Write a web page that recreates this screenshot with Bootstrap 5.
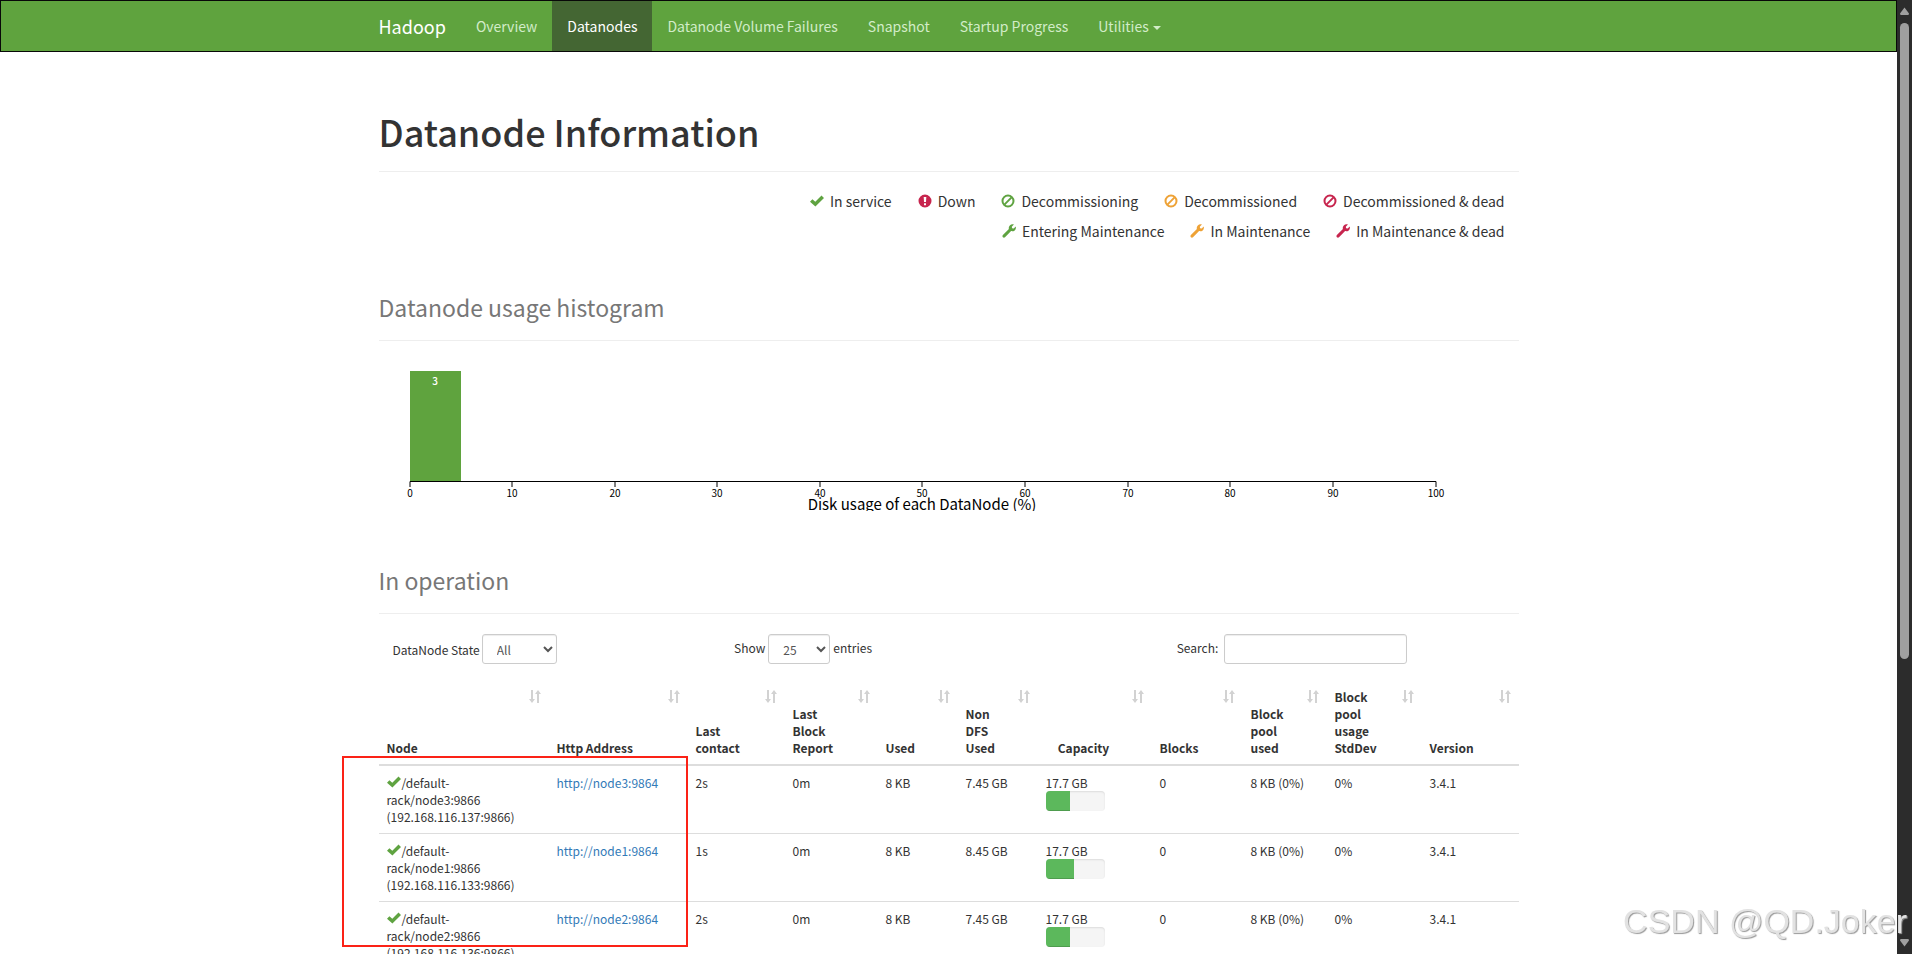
<!DOCTYPE html>
<html lang="en">
<head>
<meta charset="utf-8">
<meta name="viewport" content="width=device-width, initial-scale=1">
<title>Datanode Information</title>
<link href="https://cdn.jsdelivr.net/npm/bootstrap@5.3.0/dist/css/bootstrap.min.css" rel="stylesheet">
<style>
body{font:14px/20px "Noto Sans CJK SC",sans-serif;color:#333;background:#fff}
.page-pane{min-width:0}
.container{max-width:1170px;padding-left:15px;padding-right:15px}
.topbar{background:#5fa33e;border:1px solid #080808;padding:0}
.topbar .navbar-brand{font-size:18px;line-height:20px;color:#fff;padding:15px;margin:0 0 0 -15px}
.topbar .nav-link{color:#d2ecc8;padding:15px!important;line-height:20px}
.topbar .nav-link.active{background:#446633;color:#fff}
.topbar .dropdown-toggle::after{border-width:4px 4px 0;margin-left:4px;vertical-align:2px}
.page-title{border-bottom:1px solid #eee;margin:59px 0 0;padding-bottom:20px}
.page-title h1{font-size:36px;line-height:40px;font-weight:500;margin:0}
.section-title{border-bottom:1px solid #eee;padding-bottom:20px}
.section-title h2{font-size:23px;line-height:26px;font-weight:400;color:#777;margin:0}
.legend-list{padding:14px 14px 0;margin-bottom:48px}
.legend-list ul{column-gap:26px;line-height:30px}
.legend-list li{display:flex;align-items:center;gap:6px}
.ico{width:14px;height:14px;flex:none}
.ok{color:#5fa341}.bad{color:#c7254e}.warn{color:#eea236}
.histogram{display:block;margin:20px 0 56px;overflow:hidden;max-width:100%}
.histogram text{text-anchor:middle;font-size:10px}
.histogram .caption-text{font-size:15px}
.filters{font-size:12px;line-height:17px;padding-top:20px;margin-bottom:16px}
.filters .form-control{appearance:auto;height:30px;font-size:12px;line-height:18px;padding:5px 10px;border:1px solid #ccc;border-radius:3px;color:#555;box-shadow:inset 0 1px 1px rgba(0,0,0,.075)}
.state-select{width:75px}.length-select{width:62px}.search-input{width:183px}
.filters .shift{margin:0 2px 0 14px}
.filters .lead-gap{column-gap:3px}
.filters .search-cell{padding-left:20px;column-gap:6px}
.node-table{table-layout:fixed;width:100%;font-size:12px;line-height:17px;color:#333;margin:0}
.node-table>:not(caption)>*>*{padding:8px;border-bottom:1px solid #ddd;color:#333;background:none;vertical-align:top}
.node-table>thead>tr>th{vertical-align:bottom;border-bottom:2px solid #ddd;padding-right:30px;position:relative;font-weight:700}
.node-table>thead>tr>th svg{position:absolute;top:10px;right:8px;width:12px;height:13px;color:#d2d2d2}
.node-table a{color:#337ab7;text-decoration:none}
.node-table .ico{margin-right:1px;vertical-align:-1px}
.node-table .progress{width:59px;height:20px;background:#f5f5f5;border-radius:4px;box-shadow:inset 0 1px 2px rgba(0,0,0,.1)}
.node-table .progress-bar{background:#5cb85c;box-shadow:inset 0 -1px 0 rgba(0,0,0,.15)}
.highlight{left:-37px;top:76px;width:346px;height:191px;border:2px solid #fb2216;pointer-events:none}
.scroller{width:15px;background:#2c2c2c;padding:7px 0}
.scroller .thumb{width:9px;height:636px;border-radius:5px;background:#9f9f9f;margin:8px 0 auto 3px}
.scroller svg{width:9px;height:8px;margin-left:3px;fill:#9f9f9f;flex:none}
.watermark{right:5px;bottom:13px;font:34px/40px "Liberation Sans",sans-serif;color:#e2e2e2;text-shadow:1px 1px 1px #999;pointer-events:none;white-space:nowrap}
</style>
<script src="https://cdn.jsdelivr.net/npm/bootstrap@5.3.0/dist/js/bootstrap.bundle.min.js"></script>
</head>
<body class="d-flex vh-100 overflow-hidden">
<svg class="d-none">
  <symbol id="i-check" viewBox="0 0 14 14"><path fill="currentColor" d="M11.500 1.500 14 3.900 5.400 12.500 0 7.700l2.400-2.500 2.900 2.500z"/></symbol>
  <symbol id="i-alert" viewBox="0 0 14 14"><path fill="currentColor" fill-rule="evenodd" d="M7 .5a6.500 6.500 0 1 0 0 13 6.500 6.500 0 0 0 0-13zM5.700 3h2.600l-.3 5H6zM6 9.200h2v2H6z"/></symbol>
  <symbol id="i-ban" viewBox="0 0 14 14"><g fill="none" stroke="currentColor" stroke-width="2"><circle cx="7" cy="7" r="5.500"/><path d="m3.400 10.600 7.200-7.200"/></g></symbol>
  <symbol id="i-wrench" viewBox="0 0 14 14"><path fill="currentColor" d="M11.900.6 9.800 2.700l.3 1.500 1.600.3 2-2c.5 1.600.1 3-1 3.900-1.100.9-2.400 1-3.600.7L3 13.200c-.6.6-1.500.6-2.100 0s-.6-1.500 0-2.100l6-6C6.500 3.800 6.800 2.500 7.800 1.500 8.900.4 10.400.1 11.900.6z"/></symbol>
  <symbol id="i-sort" viewBox="0 0 12 13"><path fill="currentColor" d="M2 0h2v9h2l-3 4-3-4h2zM8 13h2V4h2L9 0 6 4h2z"/></symbol>
</svg>

<div class="page-pane flex-fill overflow-hidden">
  <nav class="navbar navbar-expand topbar">
    <div class="container justify-content-start">
      <a class="navbar-brand" href="#">Hadoop</a>
      <ul class="navbar-nav">
        <li class="nav-item"><a class="nav-link" href="#">Overview</a></li>
        <li class="nav-item"><a class="nav-link active" aria-current="page" href="#">Datanodes</a></li>
        <li class="nav-item"><a class="nav-link" href="#">Datanode Volume Failures</a></li>
        <li class="nav-item"><a class="nav-link" href="#">Snapshot</a></li>
        <li class="nav-item"><a class="nav-link" href="#">Startup Progress</a></li>
        <li class="nav-item dropdown"><a class="nav-link dropdown-toggle" href="#" role="button" data-bs-toggle="dropdown">Utilities</a></li>
      </ul>
    </div>
  </nav>

  <main class="container">
    <header class="page-title"><h1>Datanode Information</h1></header>

    <div class="legend-list">
      <ul class="list-unstyled d-flex justify-content-end m-0">
        <li><svg class="ico ok"><use href="#i-check"/></svg>In service</li>
        <li><svg class="ico bad"><use href="#i-alert"/></svg>Down</li>
        <li><svg class="ico ok"><use href="#i-ban"/></svg>Decommissioning</li>
        <li><svg class="ico warn"><use href="#i-ban"/></svg>Decommissioned</li>
        <li><svg class="ico bad"><use href="#i-ban"/></svg>Decommissioned &amp; dead</li>
      </ul>
      <ul class="list-unstyled d-flex justify-content-end m-0">
        <li><svg class="ico ok"><use href="#i-wrench"/></svg>Entering Maintenance</li>
        <li><svg class="ico warn"><use href="#i-wrench"/></svg>In Maintenance</li>
        <li><svg class="ico bad"><use href="#i-wrench"/></svg>In Maintenance &amp; dead</li>
      </ul>
    </div>

    <div class="section-title"><h2>Datanode usage histogram</h2></div>
    <svg class="histogram" width="1140" height="150">
      <rect x="31" y="10" width="51" height="110" fill="#5fa33e"/>
      <text x="56" y="24" fill="#fff" font-weight="500">3</text>
      <path d="M31 126v-5.500h1026v5.500M133 120v6M236 120v6M338 120v6M441 120v6M543 120v6M646 120v6M749 120v6M851 120v6M954 120v6" fill="none" stroke="#000"/>
      <text x="31" y="136">0</text><text x="133" y="136">10</text><text x="236" y="136">20</text><text x="338" y="136">30</text><text x="441" y="136">40</text><text x="543" y="136">50</text><text x="646" y="136">60</text><text x="749" y="136">70</text><text x="851" y="136">80</text><text x="954" y="136">90</text><text x="1057" y="136">100</text>
      <text class="caption-text" x="543" y="149">Disk usage of each DataNode (%)</text>
    </svg>

    <div class="section-title"><h2>In operation</h2></div>
    <div class="row filters">
      <div class="col-3 d-flex align-items-center"><label for="state" class="shift">DataNode State</label>
        <select id="state" class="form-control state-select"><option>All</option></select></div>
      <div class="col-3 d-flex align-items-center justify-content-center lead-gap"><label for="length" class="pb-1">Show</label>
        <select id="length" class="form-control length-select"><option>25</option></select><span class="pb-1">entries</span></div>
      <div class="col-5 offset-1 d-flex align-items-center justify-content-center search-cell"><label for="search" class="pb-1">Search:</label>
        <input id="search" type="search" class="form-control search-input"></div>
    </div>

    <div class="position-relative">
      <table class="table node-table">
        <colgroup><col width="170"><col width="139"><col width="97"><col width="93"><col width="80"><col width="80"><col width="114"><col width="91"><col width="84"><col width="95"><col width="97"></colgroup>
        <thead><tr>
          <th>Node<svg><use href="#i-sort"/></svg></th>
          <th>Http Address<svg><use href="#i-sort"/></svg></th>
          <th>Last contact<svg><use href="#i-sort"/></svg></th>
          <th>Last Block Report<svg><use href="#i-sort"/></svg></th>
          <th>Used<svg><use href="#i-sort"/></svg></th>
          <th>Non DFS Used<svg><use href="#i-sort"/></svg></th>
          <th class="text-center">Capacity<svg><use href="#i-sort"/></svg></th>
          <th>Blocks<svg><use href="#i-sort"/></svg></th>
          <th>Block pool used<svg><use href="#i-sort"/></svg></th>
          <th>Block pool usage StdDev<svg><use href="#i-sort"/></svg></th>
          <th>Version<svg><use href="#i-sort"/></svg></th>
        </tr></thead>
        <tbody>
          <tr><td><svg class="ico ok"><use href="#i-check"/></svg>/default-<br>rack/node3:9866<br>(192.168.116.137:9866)</td><td><a href="#">http://node3:9864</a></td><td>2s</td><td>0m</td><td>8 KB</td><td>7.45 GB</td><td>17.7 GB<div class="progress"><div class="progress-bar" style="width:42%"></div></div></td><td>0</td><td class="text-nowrap">8 KB (0%)</td><td>0%</td><td>3.4.1</td></tr>
          <tr><td><svg class="ico ok"><use href="#i-check"/></svg>/default-<br>rack/node1:9866<br>(192.168.116.133:9866)</td><td><a href="#">http://node1:9864</a></td><td>1s</td><td>0m</td><td>8 KB</td><td>8.45 GB</td><td>17.7 GB<div class="progress"><div class="progress-bar" style="width:49%"></div></div></td><td>0</td><td class="text-nowrap">8 KB (0%)</td><td>0%</td><td>3.4.1</td></tr>
          <tr><td><svg class="ico ok"><use href="#i-check"/></svg>/default-<br>rack/node2:9866<br>(192.168.116.136:9866)</td><td><a href="#">http://node2:9864</a></td><td>2s</td><td>0m</td><td>8 KB</td><td>7.45 GB</td><td>17.7 GB<div class="progress"><div class="progress-bar" style="width:42%"></div></div></td><td>0</td><td class="text-nowrap">8 KB (0%)</td><td>0%</td><td>3.4.1</td></tr>
        </tbody>
      </table>
      <div class="highlight position-absolute"></div>
    </div>
  </main>
</div>

<div class="scroller d-flex flex-column flex-shrink-0" aria-hidden="true">
  <svg viewBox="0 0 9 8"><path d="M4.500.5 9 6.500 8.500 8h-8L0 6.500z"/></svg>
  <div class="thumb"></div>
  <svg viewBox="0 0 9 8"><path d="M4.500 7.500 9 1.500 8.500 0h-8L0 1.500z"/></svg>
</div>
<div class="watermark position-fixed">CSDN @QD.Joker</div>
</body>
</html>
